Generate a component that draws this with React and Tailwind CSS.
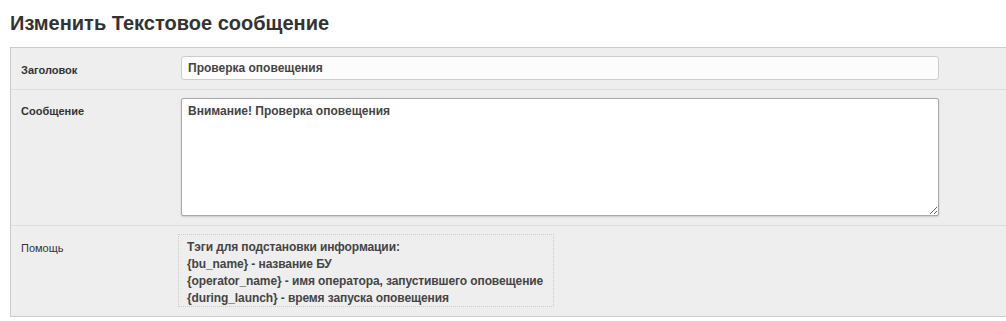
export default function App() {
  const font = { fontFamily: '"Liberation Sans", Arial, sans-serif' };
  return (
    <div className="bg-white w-[1006px] h-[321px] overflow-hidden text-[#333]" style={font}>
      <h1 className="pl-[10px] pt-[10px] h-[47px] text-[20px] leading-[27px] font-bold text-[#333]">
        Изменить Текстовое сообщение
      </h1>
      <div className="ml-[10px] bg-[#eeeeee] border-l border-t border-b border-[#cccccc] h-[270px]">
        {/* Заголовок */}
        <div className="flex h-[42px] border-b border-[#dddddd] pt-[8px]">
          <div className="w-[170px] pl-[10px] pt-[7px] text-[11px] leading-[14px] font-bold">Заголовок</div>
          <input
            readOnly
            value="Проверка оповещения"
            className="w-[758px] h-[24px] px-[6px] bg-[#fcfcfc] border border-[#cccccc] rounded-[3px] text-[12px] font-bold text-[#444] outline-none"
            style={font}
          />
        </div>
        {/* Сообщение */}
        <div className="flex h-[136px] border-b border-[#dddddd] pt-[8px]">
          <div className="w-[170px] pl-[10px] pt-[6px] text-[11px] leading-[14px] font-bold">Сообщение</div>
          <textarea
            readOnly
            value="Внимание! Проверка оповещения"
            className="w-[758px] h-[118px] px-[6px] py-[4px] bg-white border border-[#aaaaaa] rounded-[2px] shadow-[0_1px_2px_rgba(0,0,0,0.15)] text-[12px] leading-[16px] font-bold text-[#444] outline-none resize-y"
            style={font}
          />
        </div>
        {/* Помощь */}
        <div className="flex pt-[8px]">
          <div className="w-[167px] pl-[10px] pt-[7px] text-[11px] leading-[14px]">Помощь</div>
          <div className="w-[376px] h-[73px] border border-dotted border-[#cccccc] px-[8px] pt-[4px] text-[12px] leading-[17px] font-bold text-[#444] whitespace-nowrap tracking-[-0.1px]">
            <div>Тэги для подстановки информации:</div>
            <div>{'{bu_name}'} - название БУ</div>
            <div>{'{operator_name}'} - имя оператора, запустившего оповещение</div>
            <div>{'{during_launch}'} - время запуска оповещения</div>
          </div>
        </div>
      </div>
    </div>
  );
}
